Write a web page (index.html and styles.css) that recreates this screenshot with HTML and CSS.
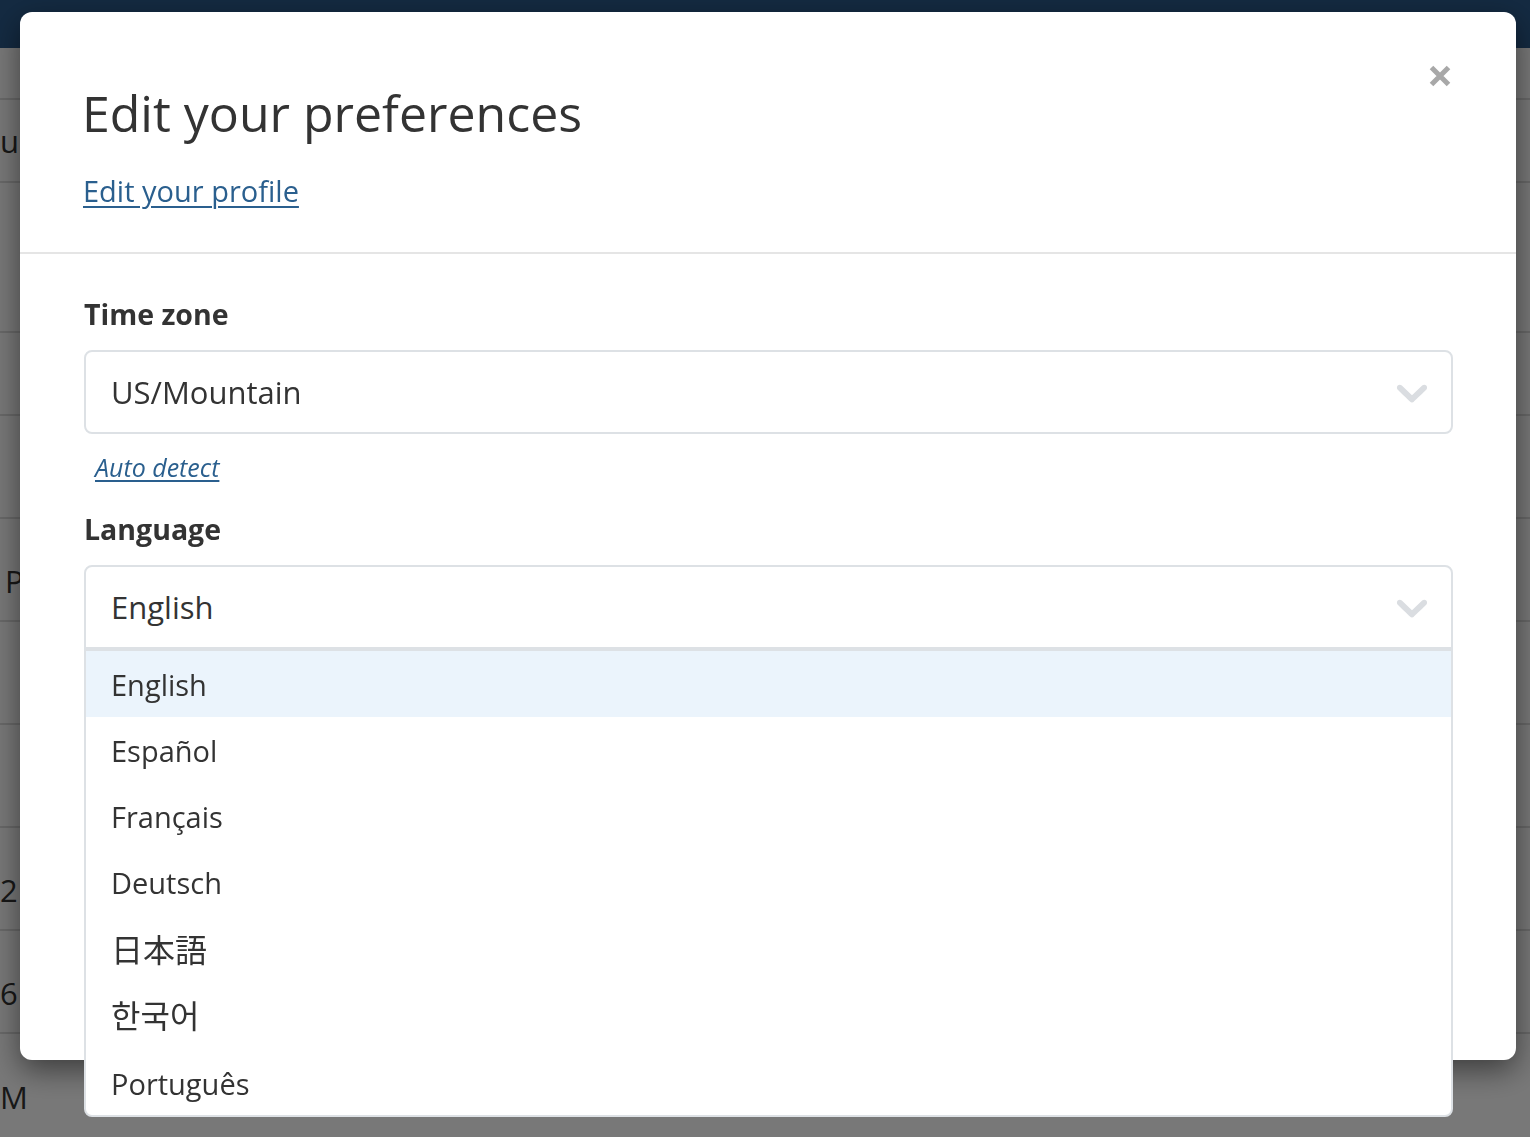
FILE: index.html
```html
<!DOCTYPE html>
<html lang="en">
<head>
<meta charset="utf-8">
<title>Edit your preferences</title>
<link rel="stylesheet" href="styles.css">
</head>
<body>
  <div class="page">
    <div class="topbar"></div>
    <div class="subnav"></div>
    <div class="row row-head"><span class="cell">u</span></div>
    <div class="row row-tall"></div>
    <div class="row row-head"></div>
    <div class="row row-item"></div>
    <div class="row row-item"><span class="cell cell-indent">P</span></div>
    <div class="row row-item"></div>
    <div class="row row-item"></div>
    <div class="row row-item"><span class="cell">2 PM</span></div>
    <div class="row row-item"><span class="cell">6</span></div>
    <div class="row row-item row-last"><span class="cell">M</span></div>
  </div>

  <div class="backdrop"></div>

  <div class="modal" role="dialog">
    <div class="modal-header">
      <h2 class="title">Edit your preferences</h2>
      <a class="profile-link" href="#">Edit your profile</a>
      <button class="close" type="button" aria-label="Close">
        <svg width="22" height="22" viewBox="0 0 22 22"><path d="M2.5 2.5 L19.5 19.5 M19.5 2.5 L2.5 19.5" stroke="#a8a8a8" stroke-width="5" fill="none"/></svg>
      </button>
    </div>
    <div class="modal-body">
      <div class="field">
        <label class="label">Time zone</label>
        <div class="select">
          <span class="select-value">US/Mountain</span>
          <svg class="chevron" width="52" height="52" viewBox="0 0 20 20"><path d="M4.516 7.548c0.436-0.446 1.043-0.481 1.576 0l3.908 3.747 3.908-3.747c0.533-0.481 1.141-0.446 1.574 0 0.436 0.445 0.408 1.197 0 1.615-0.406 0.418-4.695 4.502-4.695 4.502-0.217 0.223-0.502 0.335-0.787 0.335s-0.57-0.112-0.789-0.335c0 0-4.287-4.084-4.695-4.502s-0.436-1.17 0-1.615z"/></svg>
        </div>
        <a class="auto-detect" href="#">Auto detect</a>
      </div>
      <div class="field field-language">
        <label class="label">Language</label>
        <div class="select-wrap">
          <div class="select is-open">
            <span class="select-value">English</span>
            <svg class="chevron" width="52" height="52" viewBox="0 0 20 20"><path d="M4.516 7.548c0.436-0.446 1.043-0.481 1.576 0l3.908 3.747 3.908-3.747c0.533-0.481 1.141-0.446 1.574 0 0.436 0.445 0.408 1.197 0 1.615-0.406 0.418-4.695 4.502-4.695 4.502-0.217 0.223-0.502 0.335-0.787 0.335s-0.57-0.112-0.789-0.335c0 0-4.287-4.084-4.695-4.502s-0.436-1.17 0-1.615z"/></svg>
          </div>
          <ul class="menu">
            <li class="option is-focused">English</li>
            <li class="option">Español</li>
            <li class="option">Français</li>
            <li class="option">Deutsch</li>
            <li class="option option-cjk" lang="ja">日本語</li>
            <li class="option option-cjk option-ko" lang="ko">한국어</li>
            <li class="option">Português</li>
          </ul>
        </div>
      </div>
    </div>
  </div>
</body>
</html>
```

FILE: styles.css
```css
* {
  box-sizing: border-box;
}

html,
body {
  margin: 0;
  height: 100%;
}

body {
  font-family: "Open Sans", "Noto Sans CJK JP", sans-serif;
  color: #333;
  background: #fff;
  overflow: hidden;
}

/* ---------- page behind the dialog ---------- */
.topbar {
  height: 48px;
  background: #2b5a8b;
}

.subnav {
  height: 52px;
  border-bottom: 2px solid #ddd;
}

.row {
  display: flex;
  align-items: center;
  border-bottom: 2px solid #ddd;
  font-size: 31px;
}

.row-head {
  height: 83px;
}

.row-tall {
  height: 150px;
}

.row-item {
  height: 103px;
  padding-top: 22px;
}

.row-last {
  border-bottom: 0;
}

.cell {
  color: #333;
}

.cell-indent {
  padding-left: 5px;
}

.backdrop {
  position: fixed;
  inset: 0;
  background: rgba(0, 0, 0, 0.53);
}

/* ---------- dialog ---------- */
.modal {
  position: fixed;
  left: 20px;
  top: 12px;
  width: 1496px;
  height: 1048px;
  background: #fff;
  border-radius: 12px;
  box-shadow: 0 10px 30px rgba(0, 0, 0, 0.5);
}

.modal-header {
  position: relative;
  padding: 71px 64px 39px 62px;
  border-bottom: 2px solid #e5e5e5;
}

.title {
  margin: 0 0 25px;
  font-size: 50px;
  font-weight: 400;
  line-height: 60px;
  color: #333;
}

.profile-link {
  display: inline-block;
  margin-left: 1px;
  font-size: 29px;
  line-height: 45px;
  color: #2a5f8e;
  text-decoration: underline;
  text-decoration-thickness: 2px;
  text-underline-offset: 4px;
}

.close {
  position: absolute;
  top: 53px;
  right: 65px;
  width: 22px;
  height: 22px;
  padding: 0;
  border: 0;
  background: none;
  display: flex;
}

.modal-body {
  padding: 41px 63px 0 64px;
}

.label {
  display: block;
  margin: 0 0 17px;
  font-size: 28.5px;
  font-weight: 700;
  line-height: 38px;
  color: #333;
}

.select {
  height: 84px;
  display: flex;
  align-items: center;
  justify-content: space-between;
  padding: 0 13px 0 25px;
  border: 2px solid #dde1e5;
  border-radius: 8px;
  background: #fff;
  font-size: 31px;
  color: #333;
}

.chevron {
  fill: #dadde1;
  flex: none;
}

.auto-detect {
  display: inline-block;
  margin: 15px 0 0 11px;
  font-size: 25px;
  font-style: italic;
  line-height: 36px;
  color: #2a5f8e;
  text-decoration: underline;
  text-decoration-thickness: 2px;
  text-underline-offset: 3px;
}

.field-language {
  margin-top: 25px;
}

.select-wrap {
  position: relative;
}

.select.is-open {
  border-bottom-left-radius: 0;
  border-bottom-right-radius: 0;
}

.menu {
  position: absolute;
  top: 100%;
  left: 0;
  right: 0;
  margin: 0;
  padding: 0;
  list-style: none;
  background: #fff;
  border: 2px solid #dde1e5;
  border-radius: 0 0 8px 8px;
  overflow: hidden;
}

.option {
  height: 66px;
  display: flex;
  align-items: center;
  padding-left: 25px;
  font-size: 29px;
  color: #333;
}

.option:last-child {
  height: 68px;
  padding-top: 4px;
}

.option.is-focused {
  background: #ebf4fc;
}

.option-cjk {
  font-family: "Noto Sans CJK JP", sans-serif;
  font-size: 32px;
}

.option-ko {
  font-family: "Noto Sans CJK KR", sans-serif;
}
```
